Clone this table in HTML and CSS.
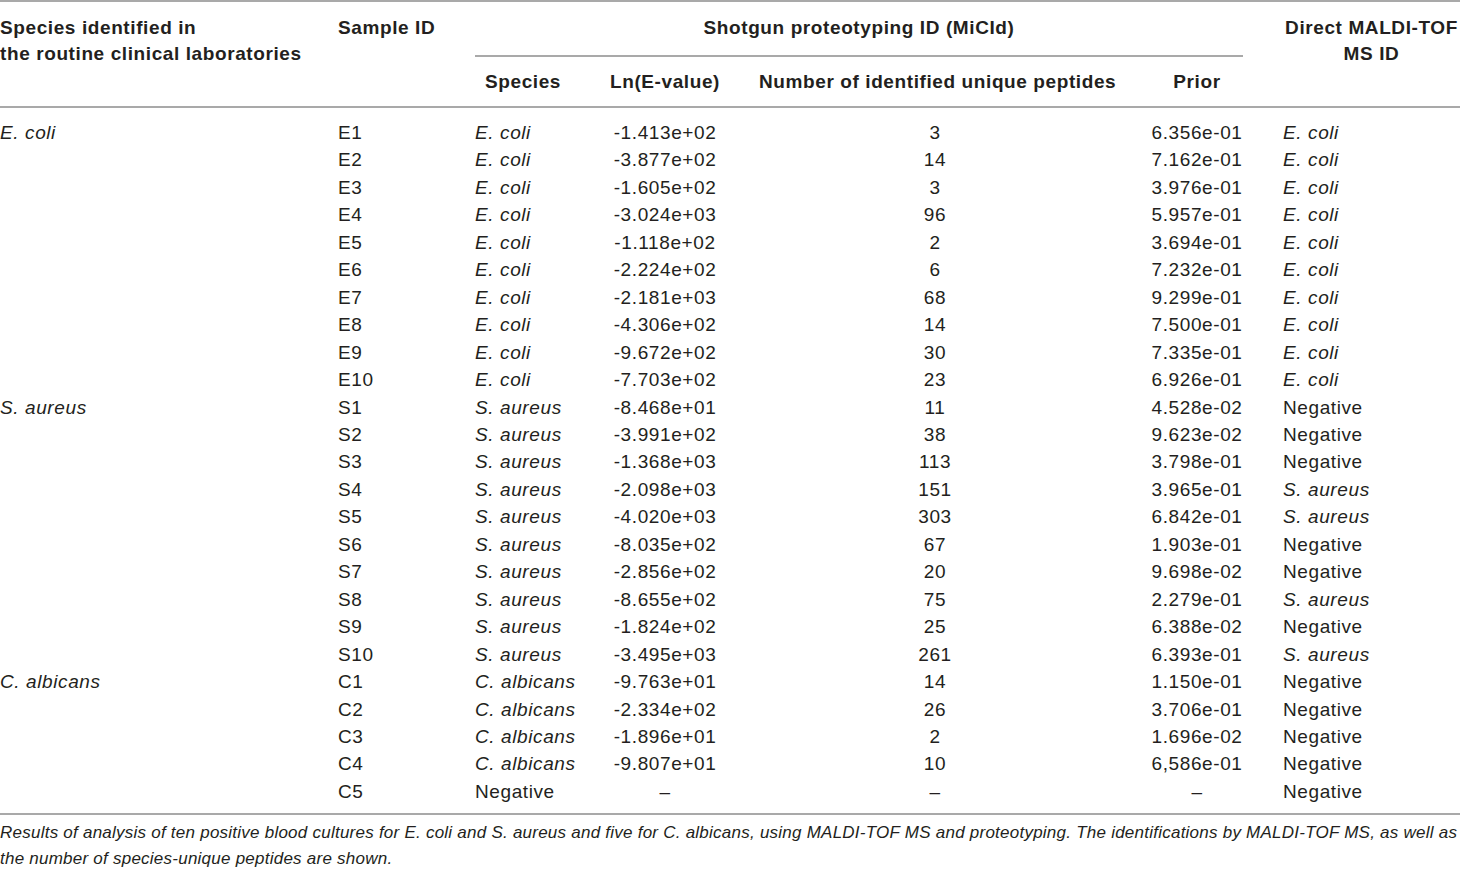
FILE: index.html
```html
<!DOCTYPE html>
<html>
<head>
<meta charset="utf-8">
<link rel="stylesheet" href="styles.css">
</head>
<body>
<table class="data">
  <colgroup>
    <col class="w1"><col class="w2"><col class="w3"><col class="w4"><col class="w5"><col class="w6"><col class="w7">
  </colgroup>
  <thead>
    <tr class="h1">
      <th rowspan="2" class="left top">Species identified in<br>the routine clinical laboratories</th>
      <th rowspan="2" class="left top">Sample ID</th>
      <th colspan="4" class="group"><div class="group-title">Shotgun proteotyping ID (MiCId)</div></th>
      <th rowspan="2" class="center top">Direct MALDI-TOF<br>MS ID</th>
    </tr>
    <tr class="h2">
      <th class="center">Species</th>
      <th class="center">Ln(E-value)</th>
      <th class="center">Number of identified unique peptides</th>
      <th class="center">Prior</th>
    </tr>
  </thead>
  <tbody>
    <tr class="first"><td><i>E. coli</i></td><td>E1</td><td><i>E. coli</i></td><td class="c">-1.413e+02</td><td class="c">3</td><td class="c">6.356e-01</td><td><i>E. coli</i></td></tr>
    <tr><td></td><td>E2</td><td><i>E. coli</i></td><td class="c">-3.877e+02</td><td class="c">14</td><td class="c">7.162e-01</td><td><i>E. coli</i></td></tr>
    <tr><td></td><td>E3</td><td><i>E. coli</i></td><td class="c">-1.605e+02</td><td class="c">3</td><td class="c">3.976e-01</td><td><i>E. coli</i></td></tr>
    <tr><td></td><td>E4</td><td><i>E. coli</i></td><td class="c">-3.024e+03</td><td class="c">96</td><td class="c">5.957e-01</td><td><i>E. coli</i></td></tr>
    <tr><td></td><td>E5</td><td><i>E. coli</i></td><td class="c">-1.118e+02</td><td class="c">2</td><td class="c">3.694e-01</td><td><i>E. coli</i></td></tr>
    <tr><td></td><td>E6</td><td><i>E. coli</i></td><td class="c">-2.224e+02</td><td class="c">6</td><td class="c">7.232e-01</td><td><i>E. coli</i></td></tr>
    <tr><td></td><td>E7</td><td><i>E. coli</i></td><td class="c">-2.181e+03</td><td class="c">68</td><td class="c">9.299e-01</td><td><i>E. coli</i></td></tr>
    <tr><td></td><td>E8</td><td><i>E. coli</i></td><td class="c">-4.306e+02</td><td class="c">14</td><td class="c">7.500e-01</td><td><i>E. coli</i></td></tr>
    <tr><td></td><td>E9</td><td><i>E. coli</i></td><td class="c">-9.672e+02</td><td class="c">30</td><td class="c">7.335e-01</td><td><i>E. coli</i></td></tr>
    <tr><td></td><td>E10</td><td><i>E. coli</i></td><td class="c">-7.703e+02</td><td class="c">23</td><td class="c">6.926e-01</td><td><i>E. coli</i></td></tr>
    <tr><td><i>S. aureus</i></td><td>S1</td><td><i>S. aureus</i></td><td class="c">-8.468e+01</td><td class="c">11</td><td class="c">4.528e-02</td><td>Negative</td></tr>
    <tr><td></td><td>S2</td><td><i>S. aureus</i></td><td class="c">-3.991e+02</td><td class="c">38</td><td class="c">9.623e-02</td><td>Negative</td></tr>
    <tr><td></td><td>S3</td><td><i>S. aureus</i></td><td class="c">-1.368e+03</td><td class="c">113</td><td class="c">3.798e-01</td><td>Negative</td></tr>
    <tr><td></td><td>S4</td><td><i>S. aureus</i></td><td class="c">-2.098e+03</td><td class="c">151</td><td class="c">3.965e-01</td><td><i>S. aureus</i></td></tr>
    <tr><td></td><td>S5</td><td><i>S. aureus</i></td><td class="c">-4.020e+03</td><td class="c">303</td><td class="c">6.842e-01</td><td><i>S. aureus</i></td></tr>
    <tr><td></td><td>S6</td><td><i>S. aureus</i></td><td class="c">-8.035e+02</td><td class="c">67</td><td class="c">1.903e-01</td><td>Negative</td></tr>
    <tr><td></td><td>S7</td><td><i>S. aureus</i></td><td class="c">-2.856e+02</td><td class="c">20</td><td class="c">9.698e-02</td><td>Negative</td></tr>
    <tr><td></td><td>S8</td><td><i>S. aureus</i></td><td class="c">-8.655e+02</td><td class="c">75</td><td class="c">2.279e-01</td><td><i>S. aureus</i></td></tr>
    <tr><td></td><td>S9</td><td><i>S. aureus</i></td><td class="c">-1.824e+02</td><td class="c">25</td><td class="c">6.388e-02</td><td>Negative</td></tr>
    <tr><td></td><td>S10</td><td><i>S. aureus</i></td><td class="c">-3.495e+03</td><td class="c">261</td><td class="c">6.393e-01</td><td><i>S. aureus</i></td></tr>
    <tr><td><i>C. albicans</i></td><td>C1</td><td><i>C. albicans</i></td><td class="c">-9.763e+01</td><td class="c">14</td><td class="c">1.150e-01</td><td>Negative</td></tr>
    <tr><td></td><td>C2</td><td><i>C. albicans</i></td><td class="c">-2.334e+02</td><td class="c">26</td><td class="c">3.706e-01</td><td>Negative</td></tr>
    <tr><td></td><td>C3</td><td><i>C. albicans</i></td><td class="c">-1.896e+01</td><td class="c">2</td><td class="c">1.696e-02</td><td>Negative</td></tr>
    <tr><td></td><td>C4</td><td><i>C. albicans</i></td><td class="c">-9.807e+01</td><td class="c">10</td><td class="c">6,586e-01</td><td>Negative</td></tr>
    <tr class="last"><td></td><td>C5</td><td>Negative</td><td class="c">–</td><td class="c">–</td><td class="c">–</td><td>Negative</td></tr>
  </tbody>
</table>
<p class="caption">Results of analysis of ten positive blood cultures for E. coli and S. aureus and five for C. albicans, using MALDI-TOF MS and proteotyping. The identifications by MALDI-TOF MS, as well as the number of species-unique peptides are shown.</p>
</body>
</html>
```
FILE: styles.css
```css
html, body {
  margin: 0;
  padding: 0;
  background: #ffffff;
}
body {
  font-family: "Liberation Sans", Arial, sans-serif;
  color: #231f20;
  width: 1460px;
}
.data {
  width: 1460px;
  table-layout: fixed;
  border-collapse: collapse;
  border-spacing: 0;
  font-size: 19px;
  letter-spacing: 0.6px;
  border-top: 2px solid #a9a9a9;
  border-bottom: 2px solid #a9a9a9;
}
.w1 { width: 338px; }
.w2 { width: 137px; }
.w3 { width: 96px; }
.w4 { width: 188px; }
.w5 { width: 352px; }
.w6 { width: 172px; }
.w7 { width: 177px; }

th, td {
  padding: 0;
  white-space: nowrap;
}
th {
  font-weight: bold;
  line-height: 26px;
}
th.left { text-align: left; }
th.center { text-align: center; }
th.top {
  vertical-align: top;
  padding-top: 13px;
}
.h1 .group {
  text-align: center;
  vertical-align: top;
}
.group-title {
  padding: 13px 0 14px;
  margin-right: 40px;
  border-bottom: 2px solid #a9a9a9;
}
.h2 th {
  height: 49px;
  vertical-align: middle;
}
thead {
  border-bottom: 2px solid #a9a9a9;
}
tbody td {
  line-height: 27.46px;
  text-align: left;
  vertical-align: middle;
}
tbody td.c { text-align: center; }
tbody tr.first td { padding-top: 11px; }
tbody tr.last td { padding-bottom: 8px; }
.caption {
  margin: 5px 0 0;
  font-size: 17px;
  letter-spacing: 0.24px;
  font-style: italic;
  line-height: 26px;
  width: 1460px;
}
```
